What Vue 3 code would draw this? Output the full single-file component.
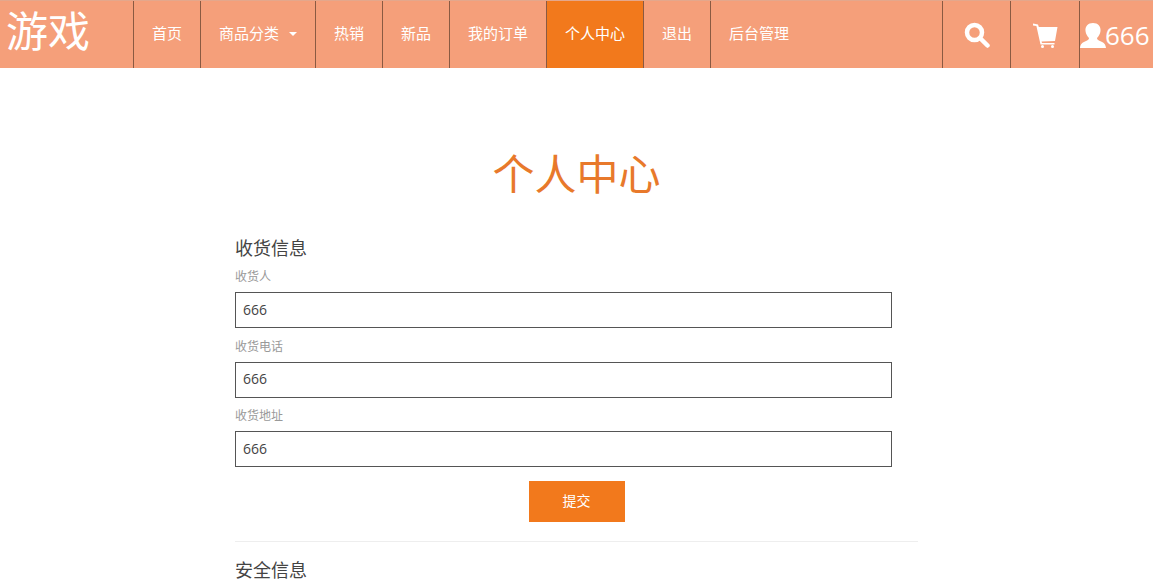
<template>
  <div class="page">
    <header class="navbar">
      <a class="brand">游戏</a>
      <ul class="nav">
        <li v-for="item in navItems" :key="item.label" class="nav-item" :class="{ active: item.active }">
          {{ item.label }}
          <span v-if="item.caret" class="caret"></span>
        </li>
      </ul>
      <div class="nav-right">
        <div class="nav-icon search">
          <svg width="26" height="26" viewBox="0 0 26 26">
            <circle cx="10.5" cy="10.5" r="7.5" fill="none" stroke="#fff" stroke-width="4.5" />
            <path d="M16.5 16.5L23.5 23.5" fill="none" stroke="#fff" stroke-width="4.5" stroke-linecap="round" />
          </svg>
        </div>
        <div class="nav-icon cart">
          <svg width="26" height="26" viewBox="0 0 26 26">
            <path d="M1 1.5L6 2.5L6.8 5H25.5L23 19L9.6 19.6L10 21H22.5V22.6H8.5L4.4 4L1 3.4Z" fill="#fff" />
            <circle cx="10.5" cy="24.5" r="1.5" fill="#fff" />
            <circle cx="20.5" cy="24.5" r="1.5" fill="#fff" />
          </svg>
        </div>
        <div class="nav-user">
          <svg width="26" height="26" viewBox="0 0 26 26">
            <path d="M13 0C18 0 21 3.5 20.5 8C20.2 11 18.5 13.5 17 15C17 16.6 18 17.3 20.5 18.2C23.5 19.4 25.5 20.5 26 25H0C0.5 20.5 2.5 19.4 5.5 18.2C8 17.3 9 16.6 9 15C7.5 13.5 5.8 11 5.5 8C5 3.5 8 0 13 0Z" fill="#fff" />
          </svg>
          <span>666</span>
        </div>
      </div>
    </header>

    <main class="content">
      <h1 class="title">个人中心</h1>
      <section class="panel">
        <h2 class="section-title">收货信息</h2>
        <form class="form" @submit.prevent>
          <div v-for="field in fields" :key="field.label" class="field">
            <label>{{ field.label }}</label>
            <input type="text" :value="field.value" />
          </div>
          <div class="actions">
            <button type="submit" class="submit">提交</button>
          </div>
        </form>
        <hr class="divider" />
        <h2 class="section-title">安全信息</h2>
      </section>
    </main>
  </div>
</template>

<script setup>
const navItems = [
  { label: '首页' },
  { label: '商品分类', caret: true },
  { label: '热销' },
  { label: '新品' },
  { label: '我的订单' },
  { label: '个人中心', active: true },
  { label: '退出' },
  { label: '后台管理' }
]

const fields = [
  { label: '收货人', value: '666' },
  { label: '收货电话', value: '666' },
  { label: '收货地址', value: '666' }
]
</script>

<style>
html,
body {
  overflow: hidden;
}
</style>

<style scoped>
.page {
  font-family: 'Open Sans', 'Noto Sans CJK SC', sans-serif;
  color: #333;
}

.navbar {
  display: flex;
  height: 68px;
  box-sizing: border-box;
  background: #f59f7a;
  border-top: 1px solid #e4a78c;
  color: #fff;
}

.brand {
  width: 133px;
  padding-left: 6px;
  box-sizing: border-box;
  font-size: 42px;
  line-height: 60px;
}

.nav {
  display: flex;
  flex: 1;
  margin: 0;
  padding: 0;
  list-style: none;
}

.nav-item {
  display: flex;
  align-items: center;
  padding: 0 18px 4px;
  border-left: 1px solid #8a5a42;
  font-size: 15px;
}

.nav-item.active {
  background: #f2791c;
}

.caret {
  width: 0;
  height: 0;
  margin-left: 10px;
  margin-top: 2px;
  border-top: 4px solid #fff;
  border-left: 4px solid transparent;
  border-right: 4px solid transparent;
}

.nav-right {
  display: flex;
}

.nav-icon {
  display: flex;
  align-items: center;
  justify-content: center;
  padding-top: 1px;
  border-left: 1px solid #8a5a42;
}

.nav-icon.search {
  width: 68px;
  box-sizing: border-box;
}

.nav-icon.cart {
  width: 69px;
  box-sizing: border-box;
}

.nav-user {
  display: flex;
  align-items: center;
  width: 74px;
  box-sizing: border-box;
  border-left: 1px solid #8a5a42;
  font-size: 26px;
}

.nav-user svg {
  margin-right: -1px;
  margin-top: 3px;
}

.content {
  width: 683px;
  margin-left: 235px;
}

.title {
  margin: 76px 0 0;
  text-align: center;
  font-size: 42px;
  font-weight: 400;
  line-height: 60px;
  color: #e8792b;
}

.panel {
  margin-top: 31px;
}

.section-title {
  margin: 0;
  font-size: 18px;
  font-weight: 400;
  line-height: 26px;
  color: #444;
}

.form {
  margin-top: 7px;
}

.field label {
  display: block;
  font-size: 12px;
  line-height: 18px;
  color: #999;
}

.field {
  margin-bottom: 9.5px;
}

.field input {
  display: block;
  width: 657px;
  height: 36px;
  margin-top: 6px;
  padding: 0 7px 2px;
  box-sizing: border-box;
  border: 1px solid #555;
  font: 14px 'Open Sans', sans-serif;
  color: #444;
  outline: none;
}

.actions {
  display: flex;
  justify-content: center;
  width: 683px;
  margin-top: 14px;
}

.submit {
  width: 96px;
  height: 41px;
  padding: 0 0 4px;
  border: none;
  background: #f2791c;
  color: #fff;
  font: 14px 'Open Sans', 'Noto Sans CJK SC', sans-serif;
}

.divider {
  margin: 19px 0 15px;
  border: none;
  border-top: 1px solid #eee;
}
</style>
